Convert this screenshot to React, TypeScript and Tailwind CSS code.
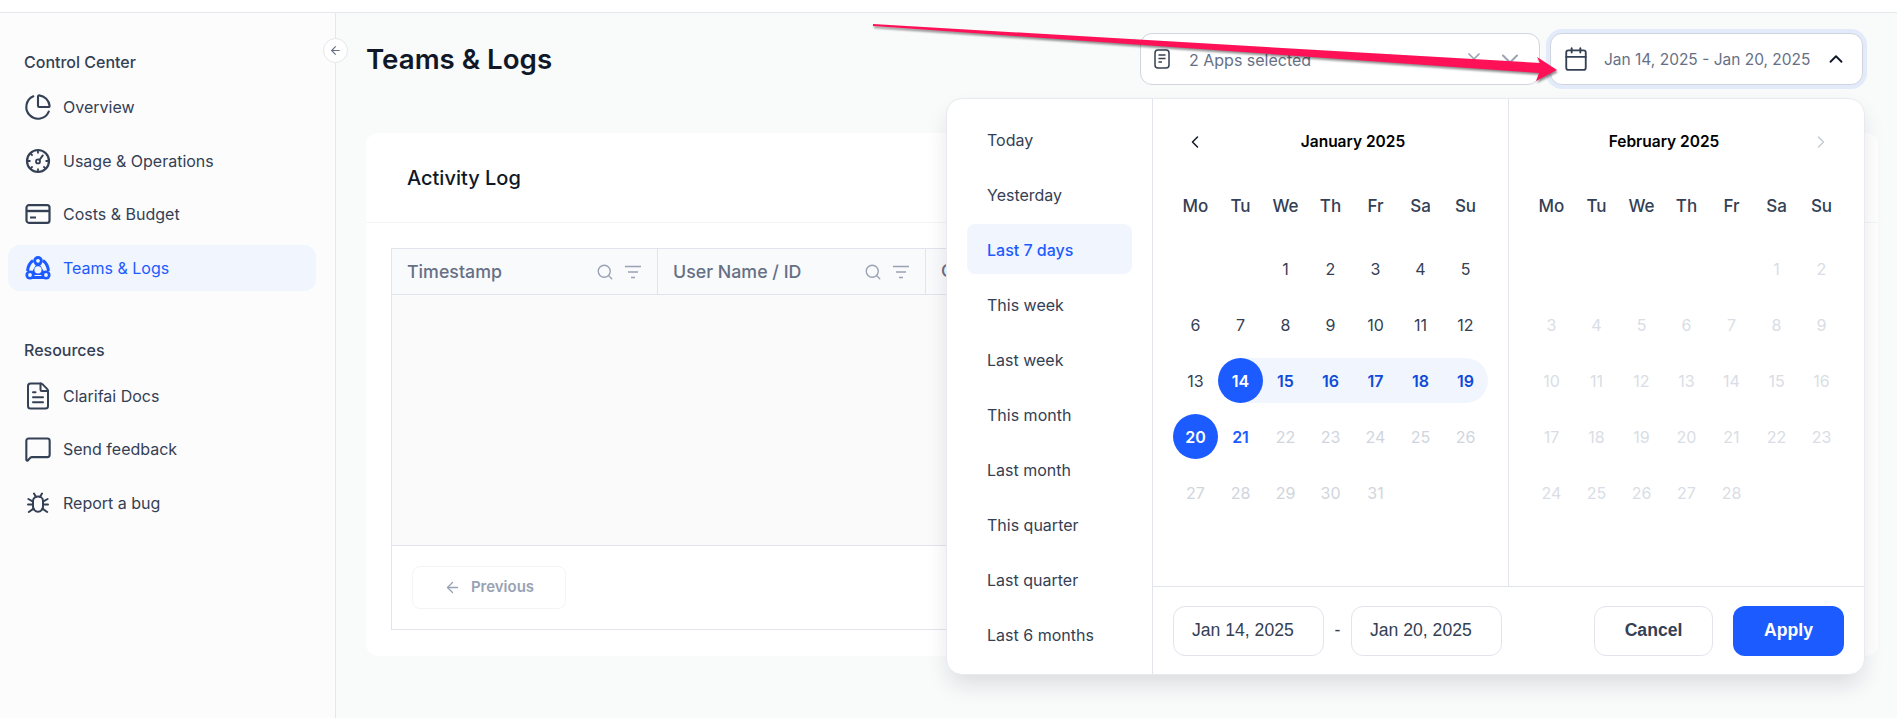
import React from "react";
import { ArrowLeft, ChevronLeft, ChevronRight, ChevronUp, ChevronDown, X, Search, Calendar, FileText, MessageSquare, PieChart } from "lucide-react";

const presets = [
  "Today",
  "Yesterday",
  "Last 7 days",
  "This week",
  "Last week",
  "This month",
  "Last month",
  "This quarter",
  "Last quarter",
  "Last 6 months",
];

const weekDays = ["Mo", "Tu", "We", "Th", "Fr", "Sa", "Su"];

const TeamsIcon = () => (
  <svg viewBox="0 0 26 26" fill="none" className="h-[26px] w-[26px] shrink-0">
    <path d="M8 5.500C5 7.500 3 11 2.500 16M18 5.500c3 2 5 5.500 5.500 10.500M7 22.500h12" stroke="#1c5bff" strokeWidth="3" />
    <path d="M13 6.500L21 20H5L13 6.500Z" fill="#1c5bff" />
    <circle cx="13" cy="14.800" r="3.600" fill="#f1f5fe" />
    <circle cx="13" cy="5.800" r="4.800" fill="#1c5bff" />
    <circle cx="13" cy="5.800" r="1.900" fill="#f1f5fe" />
    <circle cx="5" cy="20" r="4.600" fill="#1c5bff" />
    <circle cx="5" cy="20" r="1.900" fill="#f1f5fe" />
    <circle cx="21" cy="20" r="4.600" fill="#1c5bff" />
    <circle cx="21" cy="20" r="1.900" fill="#f1f5fe" />
  </svg>
);

const GaugeIcon = () => (
  <svg viewBox="0 0 26 26" fill="none" stroke="currentColor" className="h-[26px] w-[26px] shrink-0">
    <circle cx="13" cy="13" r="11" strokeWidth="2.2" />
    <path d="M13 2v3.500M13 20.500V24M2 13h3.500M20.500 13H24M5.200 5.200l2.400 2.400M5.200 20.800l2.400-2.400M20.800 20.800l-2.400-2.400" strokeWidth="1.800" />
    <circle cx="13" cy="13.400" r="2" strokeWidth="1.800" />
    <path d="M14.400 12l3.400-4.600" strokeWidth="1.900" strokeLinecap="round" />
  </svg>
);

const CardIcon = () => (
  <svg viewBox="0 0 26 26" fill="none" stroke="currentColor" className="h-[26px] w-[26px] shrink-0">
    <rect x="1.500" y="4.200" width="23" height="17.600" rx="2.400" strokeWidth="2.200" />
    <path d="M1.500 10h23" strokeWidth="2.400" />
    <path d="M5 16.500h6" strokeWidth="2" />
  </svg>
);

const BugIcon = () => (
  <svg viewBox="0 0 26 26" fill="none" stroke="currentColor" strokeWidth="2" strokeLinecap="round" className="h-[26px] w-[26px] shrink-0">
    <path d="M8 11c0-2.600 2.200-4.400 5-4.400s5 1.800 5 4.400v5.400c0 2.800-2.200 5.400-5 5.400s-5-2.600-5-5.400V11Z" />
    <path d="M9 3.600l2 3.400M17 3.600l-2 3.400M3.400 9l4.600 2.600M22.600 9L18 11.600M3 14.600h5M23 14.600h-5M3.800 22l4.800-3.400M22.200 22l-4.800-3.400" />
  </svg>
);

const AppsIcon = () => (
  <svg viewBox="0 0 16 20" fill="none" stroke="currentColor" className="h-[20px] w-[16px] shrink-0 text-[#344054]">
    <rect x="1" y="1" width="14" height="18" rx="3" strokeWidth="1.500" />
    <path d="M4.500 6h7M4.500 9.500h7M4.500 13h3.500" strokeWidth="1.500" />
  </svg>
);

const FilterIcon = () => (
  <svg viewBox="0 0 18 18" fill="none" className="h-[18px] w-[18px] text-[#98a2b3]">
    <path d="M1 3.500h16M4 9h10M7 14.500h4" stroke="currentColor" strokeWidth="1.700" />
  </svg>
);

const NavItem = ({ icon, label, active }: { icon: React.ReactNode; label: string; active?: boolean }) => (
  <div className={`flex h-[46px] items-center gap-3 rounded-xl pl-[17px] text-[16px] ${active ? "bg-[#f1f5fe] text-[#1c5bff]" : "text-[#344054]"}`}>
    <span className="flex h-[26px] w-[26px] shrink-0 items-center justify-center">{icon}</span>
    <span>{label}</span>
  </div>
);

const HeaderCell = ({ label, width }: { label: string; width: string }) => (
  <div className={`flex h-full shrink-0 items-center justify-between border-r border-[#e1e4ec] px-[15px] pt-[1px] text-[17.8px] font-medium text-[#667085] ${width}`}>
    <span>{label}</span>
    <span className="flex items-center gap-[10px]">
      <Search className="h-[18px] w-[18px] text-[#98a2b3]" strokeWidth={1.8} />
      <FilterIcon />
    </span>
  </div>
);

const MonthGrid = ({ offset, days, render }: { offset: number; days: number; render: (d: number) => React.ReactNode }) => (
  <div className="grid grid-cols-[repeat(7,45px)] auto-rows-[45px] gap-y-[11px]">
    {Array.from({ length: offset }).map((_, i) => (
      <div key={`e${i}`} />
    ))}
    {Array.from({ length: days }).map((_, i) => render(i + 1))}
  </div>
);

const WeekHeader = () => (
  <div className="mb-[25px] mt-[30px] grid h-[28px] grid-cols-[repeat(7,45px)] items-center text-center text-[17px] font-medium text-[#344054]">
    {weekDays.map((d) => (
      <div key={d}>{d}</div>
    ))}
  </div>
);

const cell = "flex items-center justify-center text-[16px]";

const renderJan = (d: number) => {
  if (d === 14)
    return (
      <div key={d} className="bg-[linear-gradient(90deg,transparent_50%,#f1f5fe_50%)]">
        <div className={`${cell} h-[45px] w-[45px] rounded-full bg-[#1c5bff] font-semibold text-white`}>14</div>
      </div>
    );
  if (d === 20)
    return (
      <div key={d} className={`${cell} rounded-full bg-[#1c5bff] font-semibold text-white`}>
        20
      </div>
    );
  if (d === 21)
    return (
      <div key={d} className={`${cell} font-semibold text-[#1c5bff]`}>
        21
      </div>
    );
  if (d > 14 && d < 20)
    return (
      <div key={d} className={`${cell} bg-[#f1f5fe] font-semibold text-[#0f4bd8] ${d === 19 ? "rounded-r-full" : ""}`}>
        {d}
      </div>
    );
  return (
    <div key={d} className={`${cell} ${d > 21 ? "text-[#d0d5dd]" : "text-[#344054]"}`}>
      {d}
    </div>
  );
};

const renderFeb = (d: number) => (
  <div key={d} className={`${cell} text-[#d9dde5]`}>
    {d}
  </div>
);

const DatePopover = () => (
  <div className="absolute left-[946px] top-[98px] z-10 flex h-[577px] w-[919px] rounded-2xl border border-[#e8eaf0] bg-white shadow-[0_12px_24px_-4px_rgba(16,24,40,0.14)]">
    <div className="flex w-[206px] shrink-0 flex-col gap-[5px] border-r border-[#e1e4ec] px-5 pt-[15px] text-[16px] text-[#344054]">
      {presets.map((p) => (
        <div key={p} className={`flex h-[50px] w-[165px] shrink-0 items-center rounded-lg px-5 pt-[2px] ${p === "Last 7 days" ? "bg-[#f1f5fe] font-medium text-[#1c5bff]" : ""}`}>
          {p}
        </div>
      ))}
    </div>
    <div className="flex min-w-0 flex-1 flex-col">
      <div className="flex h-[488px] shrink-0 border-b border-[#e1e4ec]">
        <div className="w-[356px] shrink-0 border-r border-[#e1e4ec] px-5 pt-[22px]">
          <div className="relative flex h-[42px] items-center justify-center pl-[45px] text-[15.5px] font-semibold text-black">
            <ChevronLeft className="absolute left-[12px] top-[11px] h-[20px] w-[20px] text-[#101828]" strokeWidth={1.8} />
            January 2025
          </div>
          <WeekHeader />
          <MonthGrid offset={2} days={31} render={renderJan} />
        </div>
        <div className="flex-1 px-5 pt-[22px]">
          <div className="relative flex h-[42px] items-center justify-center pr-[45px] text-[15.5px] font-semibold text-black">
            February 2025
            <ChevronRight className="absolute right-[13px] top-[11px] h-[20px] w-[20px] text-[#c7cbd3]" strokeWidth={1.8} />
          </div>
          <WeekHeader />
          <MonthGrid offset={5} days={28} render={renderFeb} />
        </div>
      </div>
      <div className="flex flex-1 items-center px-5 font-['Liberation_Sans',sans-serif] text-[17.6px]">
        <div className="flex h-[50px] w-[151px] items-center rounded-xl border border-[#e1e4ec] pl-[18px] text-[#344054]">Jan 14, 2025</div>
        <span className="w-[27px] text-center text-[#344054]">-</span>
        <div className="flex h-[50px] w-[151px] items-center rounded-xl border border-[#e1e4ec] pl-[18px] text-[#344054]">Jan 20, 2025</div>
        <div className="ml-auto flex gap-5 font-bold">
          <div className="flex h-[50px] w-[119px] items-center justify-center rounded-xl border border-[#e1e4ec] text-[#344054]">Cancel</div>
          <div className="flex h-[50px] w-[111px] items-center justify-center rounded-xl bg-[#1c5bff] text-white">Apply</div>
        </div>
      </div>
    </div>
  </div>
);

const PinkArrow = () => (
  <svg className="pointer-events-none absolute left-0 top-0 z-20 drop-shadow-[1px_2px_1px_rgba(0,0,0,0.45)]" width="1897" height="120" viewBox="0 0 1897 120" fill="none">
    <polygon points="873,24 1540,63 1537,57 1557,70 1536,81 1539,73 873,26" fill="#ff1158" />
  </svg>
);

export default function App() {
  return (
    <div className="relative flex h-[718px] w-[1897px] flex-col overflow-hidden bg-[#f9fafa] font-['Inter',sans-serif]">
      <div className="h-[13px] shrink-0 border-b border-[#e4e7ec] bg-white" />
      <div className="flex min-h-0 flex-1">
        <aside className="relative w-[336px] shrink-0 border-r border-[#e4e7ec] bg-[#fcfcfd] pl-2 pr-[19px] pt-[39px]">
          <div className="absolute left-[323px] top-[25px] flex h-[25px] w-[25px] items-center justify-center rounded-full border border-[#e4e7ec] bg-white">
            <ArrowLeft className="h-[13px] w-[13px] text-[#667085]" />
          </div>
          <div className="pl-4 text-[16px] font-medium leading-5 text-[#344054]">Control Center</div>
          <div className="mt-[12px] flex flex-col gap-[7.5px]">
            <NavItem icon={<PieChart className="h-[28px] w-[28px] shrink-0" strokeWidth={1.8} />} label="Overview" />
            <NavItem icon={<GaugeIcon />} label="Usage & Operations" />
            <NavItem icon={<CardIcon />} label="Costs & Budget" />
            <NavItem active icon={<TeamsIcon />} label="Teams & Logs" />
          </div>
          <div className="mt-[49px] pl-4 text-[16px] font-medium leading-5 text-[#344054]">Resources</div>
          <div className="mt-[13px] flex flex-col gap-[7.5px]">
            <NavItem icon={<FileText className="h-[30px] w-[30px] shrink-0" strokeWidth={1.6} />} label="Clarifai Docs" />
            <NavItem icon={<MessageSquare className="h-[28px] w-[28px] shrink-0" strokeWidth={1.8} />} label="Send feedback" />
            <NavItem icon={<BugIcon />} label="Report a bug" />
          </div>
        </aside>
        <main className="min-w-0 flex-1 pl-[30px] pr-[19px] pt-[20px]">
          <div className="flex h-[52px] items-center">
            <h1 className="pt-[2px] text-[27.7px] font-semibold text-[#101828]">Teams &amp; Logs</h1>
            <div className="ml-auto flex gap-[10px] pr-[15px]">
              <div className="flex h-[52px] w-[400px] items-center rounded-xl border border-[#d0d5dd] bg-white pl-[13px] pr-[15px] text-[16px] text-[#667085]">
                <AppsIcon />
                <span className="ml-[19px] pt-[2px]">2 Apps selected</span>
                <X className="ml-auto h-[20px] w-[20px] text-[#98a2b3]" />
                <ChevronDown className="ml-[12px] h-[28px] w-[28px] text-[#98a2b3]" strokeWidth={1.7} />
              </div>
              <div className="flex h-[52px] w-[313px] items-center rounded-xl border border-[#d0d5dd] bg-white pl-[12px] pr-[15px] text-[15.5px] text-[#667085] shadow-[0_0_0_4px_#e3ebfb]">
                <Calendar className="h-[26px] w-[26px] text-[#344054]" strokeWidth={1.7} />
                <span className="ml-[15px] whitespace-nowrap pt-[2px]">Jan 14, 2025 - Jan 20, 2025</span>
                <ChevronUp className="ml-auto h-[22px] w-[22px] text-[#101828]" strokeWidth={2} />
              </div>
            </div>
          </div>
          <section className="mt-[48px] h-[523px] rounded-xl bg-white">
            <div className="flex h-[90px] items-center border-b border-[#f2f4f7] pl-[41px] text-[20px] font-medium text-[#101828]">Activity Log</div>
            <div className="mx-[25px] mt-[25px] h-[382px] border border-[#e1e4ec]">
              <div className="flex h-[46px] border-b border-[#e1e4ec] bg-[#f9fafc]">
                <HeaderCell label="Timestamp" width="w-[266px]" />
                <HeaderCell label="User Name / ID" width="w-[268px]" />
                <div className="flex flex-1 items-center pl-[15px] text-[17.8px] font-medium text-[#667085]">Category</div>
              </div>
              <div className="h-[251px] border-b border-[#e1e4ec] bg-[#fafafa]" />
              <div className="flex h-[83px] items-center pl-[20px]">
                <div className="flex h-[43px] w-[154px] items-center justify-center gap-[10px] rounded-lg border border-[#f2f4f7] text-[15px] font-semibold text-[#98a2b3]">
                  <ArrowLeft className="h-[17px] w-[17px]" strokeWidth={1.8} />
                  Previous
                </div>
              </div>
            </div>
          </section>
        </main>
      </div>
      <DatePopover />
      <PinkArrow />
    </div>
  );
}
